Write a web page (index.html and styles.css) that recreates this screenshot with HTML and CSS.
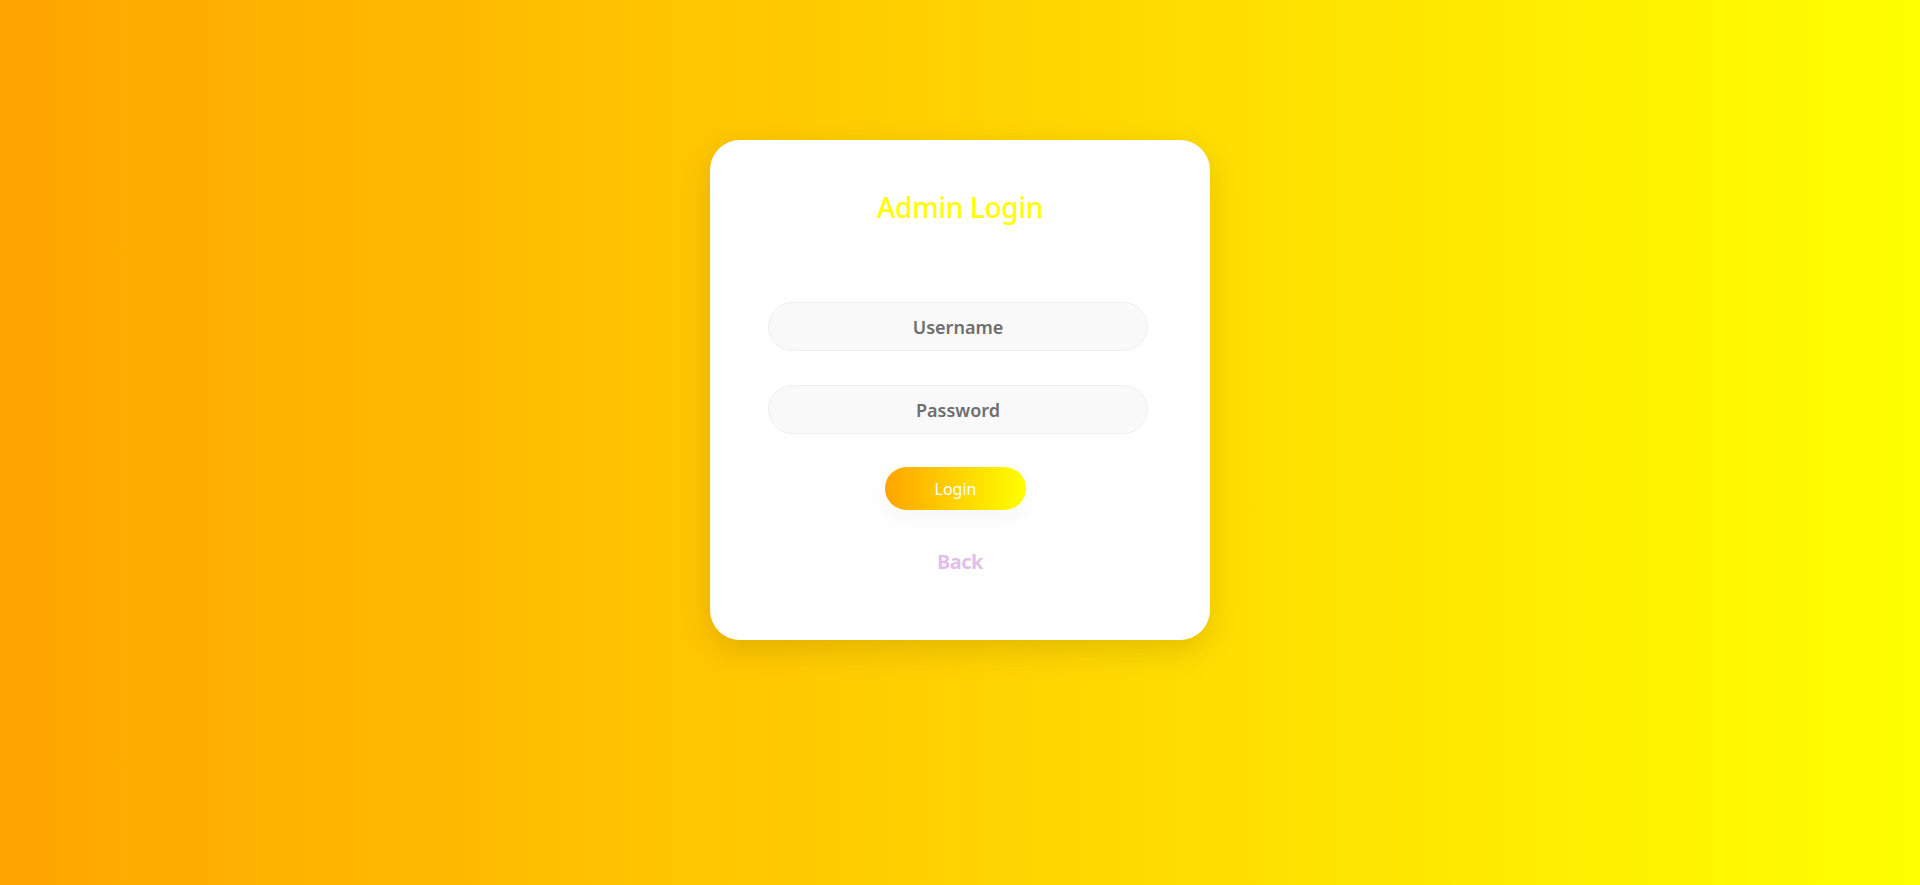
FILE: index.html
```html
<!DOCTYPE html>
<html lang="en">
<head>
<meta charset="utf-8">
<title>Admin Login</title>
<link rel="stylesheet" href="styles.css">
</head>
<body>
<main class="page">
  <section class="card">
    <h1 class="title">Admin Login</h1>
    <form class="form">
      <input class="field" type="text" placeholder="Username">
      <input class="field" type="password" placeholder="Password">
      <button class="btn" type="button">Login</button>
    </form>
    <a class="back" href="#">Back</a>
  </section>
</main>
</body>
</html>
```

FILE: styles.css
```css
* { box-sizing: border-box; }
html, body { margin: 0; padding: 0; height: 100%; }
body {
  font-family: "Noto Sans", "Open Sans", sans-serif;
  background: linear-gradient(to right, #ffa500, #ffff00);
  min-height: 885px;
}
.page {
  display: flex;
  justify-content: center;
  padding-top: 140px;
}
.card {
  width: 500px;
  height: 500px;
  background: #fff;
  border-radius: 30px;
  box-shadow: 0 10px 30px rgba(120, 90, 0, 0.22);
  display: flex;
  flex-direction: column;
  align-items: center;
  padding-top: 47px;
}
.title {
  margin: 0;
  font-size: 28px;
  font-weight: 500;
  color: #ffff00;
  line-height: 40px;
  letter-spacing: -0.3px;
}
.form {
  margin-top: 75px;
  margin-right: 4px;
  display: flex;
  flex-direction: column;
  align-items: center;
}
.field {
  width: 380px;
  height: 49px;
  border-radius: 25px;
  border: 1px solid #efefef;
  background: #f9f9f9;
  text-align: center;
  font-family: inherit;
  font-size: 18px;
  font-weight: 600;
  color: #666;
  outline: none;
}
.field::placeholder { color: #6e6e6e; opacity: 1; }
.field + .field { margin-top: 34px; }
.btn {
  margin-top: 33px;
  margin-right: 5px;
  width: 141px;
  height: 43px;
  border: none;
  border-radius: 22px;
  background: linear-gradient(to right, #ffa500, #ffff00);
  color: #fff;
  font-family: inherit;
  font-size: 16px;
  font-weight: 400;
  box-shadow: 0 8px 24px rgba(0, 0, 0, 0.04);
}
.back {
  margin-top: 39px;
  color: #e2bfe9;
  font-size: 20px;
  font-weight: 700;
  text-decoration: none;
  line-height: 26px;
  letter-spacing: -0.5px;
}
```
